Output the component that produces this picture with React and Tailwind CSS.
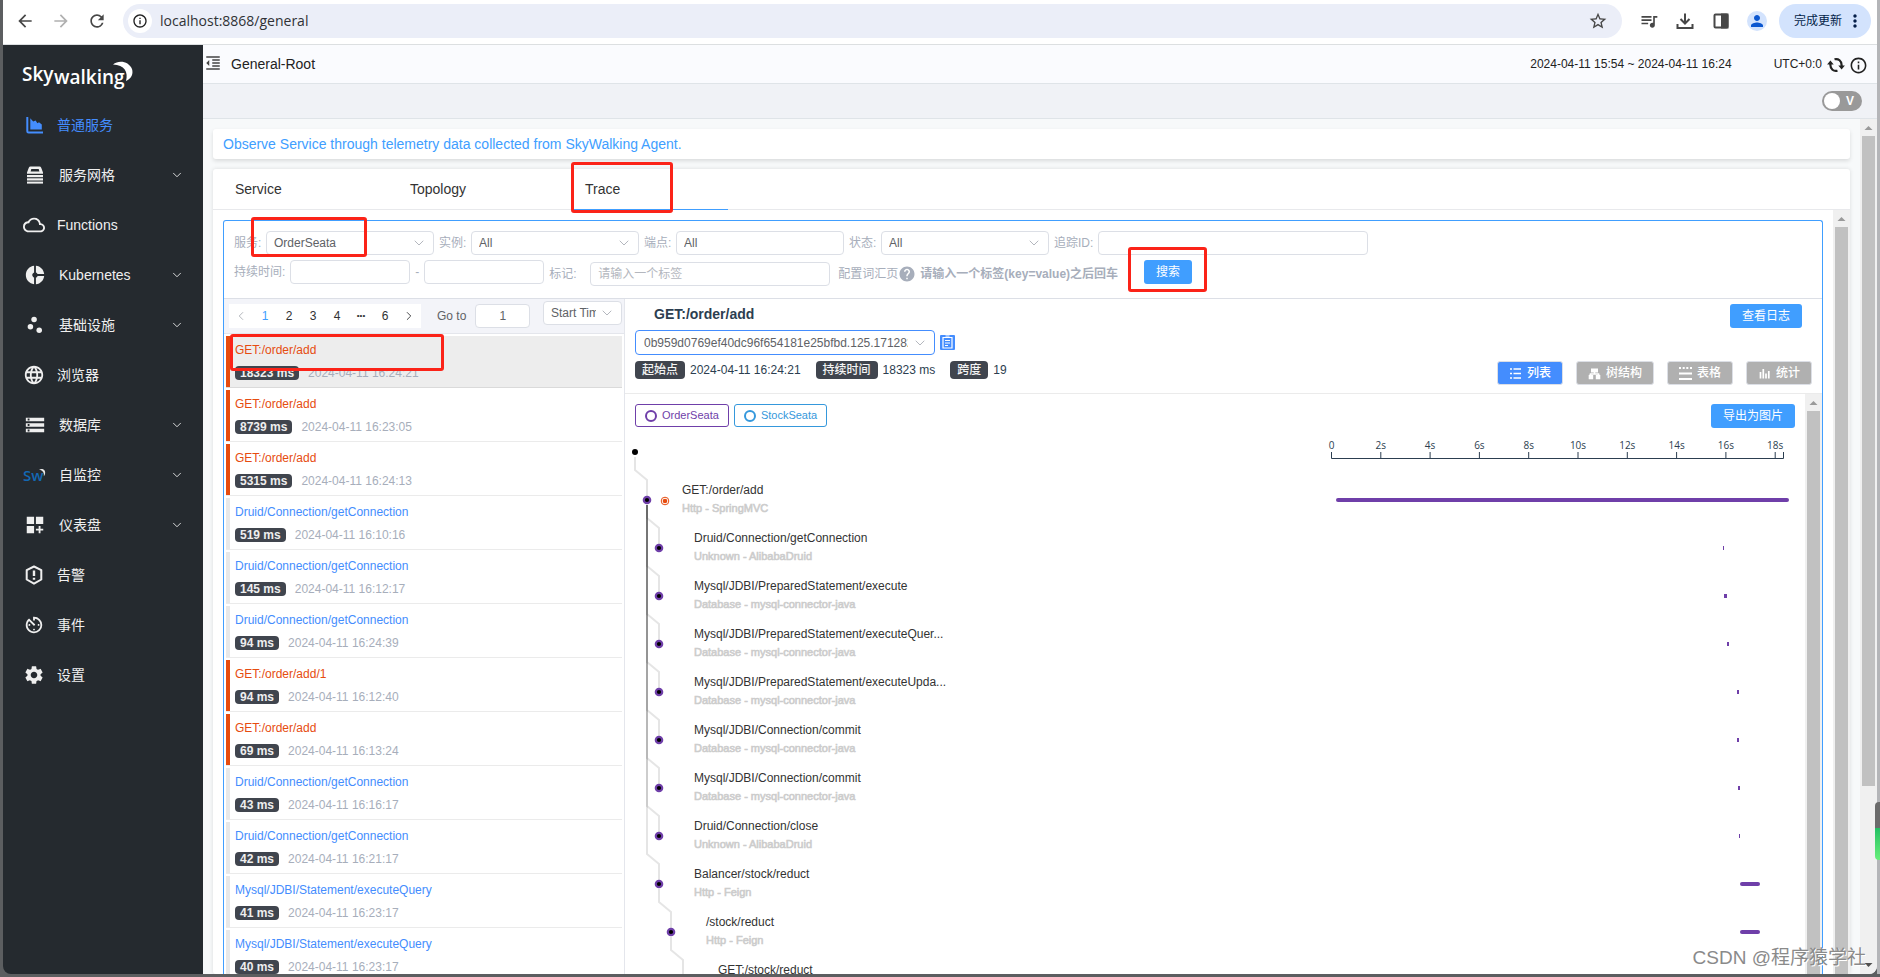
import React, { useState } from "react";
import {
  MdArrowBack,
  MdArrowForward,
  MdRefresh,
  MdInfoOutline,
  MdStarBorder,
  MdQueueMusic,
  MdPerson,
  MdMoreVert,
  MdCloudQueue,
  MdDonutSmall,
  MdScatterPlot,
  MdLanguage,
  MdStorage,
  MdDashboardCustomize,
  MdAvTimer,
  MdSettings,
  MdFormatIndentDecrease,
  MdHelp,
} from "react-icons/md";
import { ChevronDown, ChevronLeft, ChevronRight } from "lucide-react";

const AreaIcon = () => (
  <svg viewBox="0 0 17 17" className="size-[17px]" fill="currentColor">
    <path d="M1.300 0.500v13.700c0 .8.500 1.300 1.300 1.300H16.500" fill="none" stroke="currentColor" strokeWidth="2" strokeLinecap="round" />
    <path d="M4.300 1.200 7.200 4.600 9.600 3.400 11.400 6.200 13 5.300 15.800 7.400V12.600H4.300z" />
  </svg>
);

const MeshIcon = () => (
  <svg viewBox="0 0 18 18" className="size-[18px]" fill="currentColor">
    <path
      fillRule="evenodd"
      d="M4.5 0.5h9c.8 0 1.4.4 1.7 1.200L17 6.500v1.200H1V6.500L2.800 1.700C3.100.900 3.700.500 4.500.500zM5.300 3 4.600 5.500h8.800L12.700 3z"
    />
    <rect x="1" y="9" width="16" height="2.200" />
    <rect x="1" y="12.300" width="16" height="2.200" />
    <rect x="1" y="15.600" width="16" height="2" />
  </svg>
);

const SwIcon = () => (
  <svg viewBox="0 0 24 18" className="h-[18px] w-6 -mx-[2px]">
    <text x="0" y="15" className="fill-[#1368b3] text-[15px] font-semibold" fontFamily="Open Sans, sans-serif">
      Sw
    </text>
    <path d="M16 3.500c3.500-1.600 7 .500 6 4.500-.200.900-.600 1.600-1.200 2.200.6-3-.8-5.800-4.800-6.700z" fill="#e8e8e8" />
  </svg>
);

const AlarmIcon = () => (
  <svg viewBox="0 0 20 20" className="size-5" fill="none" stroke="currentColor" strokeWidth="2" strokeLinejoin="round">
    <path d="M10 1.500 17.300 5.200V14.500L10 18.700 2.700 14.500V5.200z" />
    <path d="M10 5.500v5.500M10 12.700v2" strokeWidth="2.400" />
  </svg>
);

const ReloadIcon = () => (
  <svg viewBox="0 0 18 18" className="size-[18px]" fill="none" stroke="currentColor" strokeWidth="2.200">
    <path d="M7.500 3.300C11.500 2.300 14.600 5 14.600 9V10M10.500 14.700C6.500 15.700 3.400 13 3.400 9V8" />
    <path d="M11.300 9.500h6.600L14.600 13.500zM0.100 8.500h6.600L3.400 4.500z" fill="currentColor" stroke="none" />
  </svg>
);

const MENU = [
  { label: "普通服务", icon: <AreaIcon />, active: true },
  { label: "服务网格", icon: <MeshIcon />, children: true },
  { label: "Functions", icon: <MdCloudQueue className="-mx-[2px] size-[22px]" /> },
  { label: "Kubernetes", icon: <MdDonutSmall className="size-[22px]" />, children: true },
  { label: "基础设施", icon: <MdScatterPlot className="size-[22px]" />, children: true },
  { label: "浏览器", icon: <MdLanguage className="size-[22px]" /> },
  { label: "数据库", icon: <MdStorage className="size-[22px]" />, children: true },
  { label: "自监控", icon: <SwIcon />, children: true },
  { label: "仪表盘", icon: <MdDashboardCustomize className="size-[22px]" />, children: true },
  { label: "告警", icon: <AlarmIcon /> },
  { label: "事件", icon: <MdAvTimer className="size-[22px]" /> },
  { label: "设置", icon: <MdSettings className="size-[22px]" /> },
];

const TRACES = [
  ["GET:/order/add", 18323, "16:24:21", true],
  ["GET:/order/add", 8739, "16:23:05", true],
  ["GET:/order/add", 5315, "16:24:13", true],
  ["Druid/Connection/getConnection", 519, "16:10:16", false],
  ["Druid/Connection/getConnection", 145, "16:12:17", false],
  ["Druid/Connection/getConnection", 94, "16:24:39", false],
  ["GET:/order/add/1", 94, "16:12:40", true],
  ["GET:/order/add", 69, "16:13:24", true],
  ["Druid/Connection/getConnection", 43, "16:16:17", false],
  ["Druid/Connection/getConnection", 42, "16:21:17", false],
  ["Mysql/JDBI/Statement/executeQuery", 41, "16:23:17", false],
  ["Mysql/JDBI/Statement/executeQuery", 40, "16:23:17", false],
];

const SPANS = [
  { name: "GET:/order/add", sub: "Http - SpringMVC", depth: 1, parent: -1, start: 11, width: 453, error: true },
  { name: "Druid/Connection/getConnection", sub: "Unknown - AlibabaDruid", depth: 2, parent: 0, start: 398, width: 1 },
  { name: "Mysql/JDBI/PreparedStatement/execute", sub: "Database - mysql-connector-java", depth: 2, parent: 0, start: 399, width: 3 },
  { name: "Mysql/JDBI/PreparedStatement/executeQuer...", sub: "Database - mysql-connector-java", depth: 2, parent: 0, start: 402, width: 2 },
  { name: "Mysql/JDBI/PreparedStatement/executeUpda...", sub: "Database - mysql-connector-java", depth: 2, parent: 0, start: 412, width: 2 },
  { name: "Mysql/JDBI/Connection/commit", sub: "Database - mysql-connector-java", depth: 2, parent: 0, start: 412, width: 2 },
  { name: "Mysql/JDBI/Connection/commit", sub: "Database - mysql-connector-java", depth: 2, parent: 0, start: 413, width: 2 },
  { name: "Druid/Connection/close", sub: "Unknown - AlibabaDruid", depth: 2, parent: 0, start: 414, width: 1 },
  { name: "Balancer/stock/reduct", sub: "Http - Feign", depth: 2, parent: 0, start: 415, width: 20 },
  { name: "/stock/reduct", sub: "Http - Feign", depth: 3, parent: 8, start: 415, width: 20 },
  { name: "GET:/stock/reduct", depth: 4, parent: 9, start: 425, width: 8 },
];

const nodeX = (depth) => 10 + depth * 12;
const nodeY = (i) => 72 + i * 48;

function Scrollbar({ short }) {
  return (
    <div className="flex w-[17px] shrink-0 flex-col items-center bg-[#f0f0f0]" aria-hidden="true">
      <svg viewBox="0 0 17 17" className="size-[17px] shrink-0">
        <path d="M4.500 11h8L8.500 7z" fill="#9a9a9a" />
      </svg>
      <div className={`w-[13px] bg-[#c1c1c1] ${short ? "h-[650px]" : "flex-1"}`} />
      {short && (
        <svg viewBox="0 0 17 17" className="mt-auto size-[17px] shrink-0">
          <path d="M4.500 6h8l-4 4z" fill="#505050" />
        </svg>
      )}
    </div>
  );
}

function Highlight({ className }) {
  return <div className={`pointer-events-none absolute z-10 rounded-[3px] border-[3px] border-[#fb2318] ${className}`} />;
}

function SelectBox({ id, value, label, className = "", selectClass = "border-[#dcdfe6] pl-[7px]" }) {
  return (
    <div className={`relative flex items-center ${className}`}>
      <select
        id={id}
        aria-label={label}
        className={`h-full w-full appearance-none rounded border bg-white text-xs text-[#606266] outline-none ${selectClass}`}
      >
        <option>{value}</option>
      </select>
      <ChevronDown className="pointer-events-none absolute right-[7px] size-4 text-[#b4b7be]" strokeWidth={1.5} />
    </div>
  );
}

const fieldClass =
  "h-6 rounded border border-[#dcdfe6] bg-white px-[7px] text-xs text-[#606266] outline-none placeholder:text-[#b4b7be]";

function BrowserBar() {
  return (
    <header className="flex h-[45px] shrink-0 items-center border-b border-[#dcdfe1] bg-white pb-[2px] text-[#474747]">
      <div className="flex items-center gap-4 pl-3 pr-4">
        <button aria-label="Back"><MdArrowBack className="size-5" /></button>
        <button aria-label="Forward" className="text-[#b0b0b0]"><MdArrowForward className="size-5" /></button>
        <button aria-label="Reload"><MdRefresh className="size-5" /></button>
      </div>
      <div className="flex h-[34px] flex-1 items-center rounded-full bg-[#ebeef8] pl-[5px] pr-[14px]">
        <span className="flex size-6 items-center justify-center rounded-full bg-white text-[#202020]">
          <MdInfoOutline className="size-4" />
        </span>
        <input
          aria-label="Address"
          className="ml-2 flex-1 bg-transparent font-['Open_Sans',sans-serif] text-sm text-[#303236] outline-none"
          defaultValue="localhost:8868/general"
        />
        <button aria-label="Bookmark"><MdStarBorder className="size-5" /></button>
      </div>
      <div className="flex items-center gap-4 pl-[17px] pr-3">
        <button aria-label="Media"><MdQueueMusic className="size-5" /></button>
        <button aria-label="Downloads">
          <svg viewBox="0 0 20 20" className="size-5" fill="none" stroke="currentColor" strokeWidth="2">
            <path d="M10 2.500v9M5.500 8l4.500 4.500L14.500 8M2.500 13v4h15v-4" />
          </svg>
        </button>
        <button aria-label="Side panel">
          <svg viewBox="0 0 20 20" className="size-5" fill="none" stroke="currentColor" strokeWidth="2">
            <rect x="3.500" y="3.500" width="13" height="13" rx="1" />
            <path d="M11 3.500h5.500v13H11z" fill="currentColor" />
          </svg>
        </button>
        <button aria-label="Profile" className="flex size-5 items-center justify-center rounded-full bg-[#d3e3fd] text-[#0b57d0]">
          <MdPerson className="size-[18px]" />
        </button>
      </div>
      <button className="mr-[6px] flex h-[34px] items-center rounded-full bg-[#d3e3fd] pl-[15px] pr-[6px] text-xs text-[#041e49]">
        完成更新
        <MdMoreVert className="ml-[3px] size-5" />
      </button>
    </header>
  );
}

function Sidebar() {
  return (
    <aside className="w-[200px] shrink-0 bg-[#252a2f] text-[#efefef]">
      <div className="pl-[19px] pt-3">
        <svg viewBox="0 0 116 34" className="block h-[34px] w-[116px]" fill="#fff" fontFamily="Open Sans, sans-serif">
          <text x="0" y="24" fontSize="19" fontWeight="600">Sky</text>
          <text x="32" y="27" fontSize="19" fontWeight="600">walking</text>
          <path d="M91 7.500C97 2.500 107 4.500 110 12c1.500 5-.500 9.500-6 12 2.500-9-1.500-16-13-16.500z" />
        </svg>
      </div>
      <nav className="pt-[9px]">
        {MENU.map((m) => (
          <a
            key={m.label}
            href="#menu"
            className={`flex h-[50px] items-center pr-[19px] text-sm ${m.children ? "pl-[21px]" : "pl-5"} ${m.active ? "text-[#448dfe]" : ""}`}
          >
            <span className="flex w-[22px] items-center justify-center">{m.icon}</span>
            <span className={`flex-1 ${m.children ? "pl-[13px]" : "pl-3"}`}>{m.label}</span>
            {m.children && <ChevronDown className="size-[14px]" strokeWidth={1.5} />}
          </a>
        ))}
      </nav>
    </aside>
  );
}

function TopBar() {
  return (
    <>
      <div className="flex h-[39px] shrink-0 items-center border-b border-[#dfe4e8] bg-[#fafbfe] pl-[1px] pr-[9px] text-[#222]">
        <button aria-label="Collapse menu" className="mb-[3px]">
          <MdFormatIndentDecrease className="size-[18px] text-[#444]" />
        </button>
        <h1 className="flex-1 pl-[9px] text-sm">General-Root</h1>
        <span className="text-xs">2024-04-11 15:54 ~ 2024-04-11 16:24</span>
        <span className="ml-[42px] text-xs">UTC+0:0</span>
        <button aria-label="Reload data" className="ml-[5px] pt-[2px]"><ReloadIcon /></button>
        <button aria-label="About" className="ml-1 pt-[2px]"><MdInfoOutline className="size-[19px]" /></button>
      </div>
      <div className="flex h-[35px] shrink-0 items-center justify-end border-b border-[#dfe4e8] bg-[#f0f2f6] pr-[15px]">
        <label className="relative flex h-5 w-10 cursor-pointer items-center rounded-full bg-[#999] pl-[2px] pr-2 text-xs font-bold text-white">
          <input type="checkbox" className="peer sr-only" aria-label="View mode" />
          <span className="size-4 rounded-full bg-white" />
          <span className="ml-auto">V</span>
        </label>
      </div>
    </>
  );
}

function Filters() {
  return (
    <form className="flex flex-col gap-[5px] border-b border-[#dcdfe6] px-[10px] pb-3 pt-[10px] text-xs text-[#a7aebb]" onSubmit={(e) => e.preventDefault()}>
      <div className="flex items-center gap-[5px]">
        <label htmlFor="service" className="w-[27px] whitespace-nowrap">服务:</label>
        <div className="relative">
          <SelectBox id="service" value="OrderSeata" className="h-6 w-[168px]" />
          <Highlight className="-left-[15px] -top-[14px] h-10 w-[116px]" />
        </div>
        <label htmlFor="instance" className="w-[27px] whitespace-nowrap">实例:</label>
        <SelectBox id="instance" value="All" className="h-6 w-[168px]" />
        <label htmlFor="endpoint" className="w-[27px] whitespace-nowrap">端点:</label>
        <input id="endpoint" className={`${fieldClass} w-[168px]`} defaultValue="All" />
        <label htmlFor="status" className="w-[27px] whitespace-nowrap">状态:</label>
        <SelectBox id="status" value="All" className="h-6 w-[168px]" />
        <label htmlFor="traceid">追踪ID:</label>
        <input id="traceid" className={`${fieldClass} w-[270px]`} />
      </div>
      <div className="flex h-[26px] items-start gap-[5px]">
        <label htmlFor="dur-min" className="leading-6">持续时间:</label>
        <input id="dur-min" className={`${fieldClass} w-[120px]`} />
        <span className="leading-6">-</span>
        <input aria-label="最大持续时间" className={`${fieldClass} w-[120px]`} />
        <div className="flex items-center pt-[2px]">
          <label htmlFor="tags" className="w-[41px]">标记:</label>
          <input id="tags" className={`${fieldClass} w-[240px]`} placeholder="请输入一个标签" />
          <a href="#vocab" className="flex items-center pl-2">
            配置词汇页
            <MdHelp className="size-[18px]" />
          </a>
          <b className="pl-1">请输入一个标签(key=value)之后回车</b>
        </div>
        <div className="relative ml-[21px]">
          <button className="h-6 w-12 rounded-[3px] bg-[#409eff] text-xs text-white">搜索</button>
          <Highlight className="-left-4 -top-[13px] h-[45px] w-[79px]" />
        </div>
      </div>
    </form>
  );
}

function TraceList() {
  const [current, setCurrent] = useState(0);
  return (
    <section className="flex w-[401px] shrink-0 flex-col border-r border-[#e4e6ec]">
      <div className="flex h-[35px] shrink-0 items-start border-b border-[#e4e6ec] bg-[#f3f4f9] pl-[5px] pr-[2px] text-xs text-[#606266]">
        <div className="mt-[5px] flex h-6 items-center bg-white text-[#303133]">
          <button aria-label="Previous page" className="flex w-6 justify-center text-[#a8abb2]"><ChevronLeft className="size-[14px]" strokeWidth={1.5} /></button>
          {["1", "2", "3", "4", "•••", "6"].map((p) => (
            <button key={p} className={`w-6 text-center ${p === "1" ? "text-[#409eff]" : ""} ${p === "•••" ? "text-[8px]" : ""}`}>{p}</button>
          ))}
          <button aria-label="Next page" className="flex w-6 justify-center"><ChevronRight className="size-[14px]" strokeWidth={1.5} /></button>
        </div>
        <label htmlFor="goto" className="mt-[5px] pl-4 leading-6">Go to</label>
        <input id="goto" defaultValue="1" className={`${fieldClass} ml-[9px] mt-[5px] w-[55px] text-center`} />
        <SelectBox id="order" label="Order" value="Start Time" className="ml-auto mt-[2px] h-6 w-[79px]" selectClass="border-[#dcdfe6] pl-[7px] pr-[25px]" />
      </div>
      <ul className="relative flex min-h-0 flex-1 flex-col gap-[2px] overflow-hidden px-[2px] pt-[2px]">
        <Highlight className="left-[6px] top-0 h-[37px] w-[214px]" />
        {TRACES.map(([name, ms, time, error], i) => (
          <li key={i} className="shrink-0">
            <button
              onClick={() => setCurrent(i)}
              className={`flex h-[52px] w-full border-b text-left text-xs ${i === current ? "border-[#dadada] bg-[#ededed]" : "border-[#ebebeb]"}`}
            >
              <span className={`h-full w-1 shrink-0 ${error ? "bg-[#e64c10]" : "bg-[#e8e8e8]"}`} />
              <span className="flex flex-col pl-[5px] pt-[6px]">
                <span className={`leading-4 ${error ? "text-[#e64c10]" : "text-[#448dfe]"}`}>{name}</span>
                <span className="flex items-center gap-[9px] pt-[7px]">
                  <span className="rounded bg-[#40454e] px-[5px] font-bold leading-[14px] text-[#eee]">{ms} ms</span>
                  <span className="leading-4 text-[#a7aebb]">2024-04-11 {time}</span>
                </span>
              </span>
            </button>
          </li>
        ))}
      </ul>
    </section>
  );
}

const VIEWS = [
  {
    label: "列表",
    active: true,
    icon: <path d="M1 2h2M4.500 2H12M1 6.500h2M4.500 6.500H12M1 11h2M4.500 11H12" stroke="#fff" strokeWidth="1.500" />,
  },
  {
    label: "树结构",
    icon: (
      <path
        d="M3 1.500h7v4H7.300V6.300h3.200c.6 0 1 .4 1 1V8h.8v4.300H7.800V8h1.800V7.800H3.400V8h1.800v4.300H.7V8h.8V7.300c0-.6.4-1 1-1h3.200V5.500H3z"
        fill="#fff"
      />
    ),
  },
  {
    label: "表格",
    icon: <path d="M0 1h2M3.700 1h2M7.300 1h2M11 1h2M0 6.500h13M0 12h13" stroke="#fff" strokeWidth="2" />,
  },
  { label: "统计", icon: <path d="M2.500 5v6.500M5.300 2v9.500M8 6.500v5M10.800 4v7.500" stroke="#fff" strokeWidth="1.700" /> },
];

function Stat({ label, value }) {
  return (
    <span className="flex items-center">
      <span className="rounded bg-[#40454e] px-[7px] font-medium leading-[18px] text-[#f4f4f4]">{label}</span>
      <span className="pl-[5px] text-[#2c3e50]">{value}</span>
    </span>
  );
}

function TraceHeader() {
  return (
    <div className="border-b border-[#ebebeb] px-[10px] pb-2">
      <div className="flex h-[31px] items-center pb-[1px] pl-[19px] pr-[10px]">
        <h2 className="flex-1 text-sm font-bold text-[#2c3e50]">GET:/order/add</h2>
        <button className="mt-[3px] h-6 rounded-[3px] bg-[#409eff] px-3 text-xs text-white">查看日志</button>
      </div>
      <div className="flex items-center gap-[5px]">
        <SelectBox
          id="trace"
          label="Trace ID"
          value="0b959d0769ef40dc96f654181e25bfbd.125.17128238615430015"
          className="h-[25px] w-[300px]"
          selectClass="border-[#448dfe] pl-2 pr-[26px]"
        />
        <button aria-label="Copy trace ID">
          <svg viewBox="0 0 15 15" className="size-[15px]">
            <rect width="15" height="15" rx="1" fill="#448dfe" />
            <path d="M3 2.500h9v10.500H3zM5.500 1h4" stroke="#fff" fill="none" strokeWidth="1.200" />
            <path d="M5 5.500h5M5 8h5M5 10.500h3" stroke="#fff" />
          </svg>
        </button>
      </div>
      <div className="mt-[6px] flex items-start text-xs">
        <div className="flex flex-1 gap-[15px]">
          <Stat label="起始点" value="2024-04-11 16:24:21" />
          <Stat label="持续时间" value="18323 ms" />
          <Stat label="跨度" value="19" />
        </div>
        <div className="flex gap-[13px]">
          {VIEWS.map((v) => (
            <button
              key={v.label}
              className={`flex h-6 items-center gap-[5px] rounded-[3px] border border-[#dcdfe6] px-[11px] font-medium text-white ${v.active ? "bg-[#448dfe]" : "bg-[#b0b0b0]"}`}
            >
              <svg viewBox="0 0 13 13" className="size-[13px]" fill="none">{v.icon}</svg>
              {v.label}
            </button>
          ))}
        </div>
      </div>
    </div>
  );
}

function ServiceTag({ name, className }) {
  return (
    <span className={`flex h-[23px] items-center gap-[5px] rounded-[3px] border px-[9px] text-[11px] ${className}`}>
      <span className="size-3 rounded-full border-2 border-current" />
      {name}
    </span>
  );
}

function SpanTree() {
  return (
    <svg viewBox="0 0 380 580" className="h-[580px] w-[380px] shrink-0" fontFamily="Liberation Sans, Arial, sans-serif">
      <circle cx="10" cy="24" r="3" />
      <g fill="none" stroke="rgba(0,0,0,0.1)" strokeWidth="2">
        {SPANS.map((s, i) => {
          const px = nodeX(s.depth - 1);
          const py = s.parent < 0 ? 24 : nodeY(s.parent);
          const x = nodeX(s.depth);
          const y = nodeY(i);
          return <path key={i} d={`M${px} ${py + 5}V${y - 30}L${x} ${y - 20}V${y - 4}`} />;
        })}
      </g>
      {SPANS.map((s, i) => {
        const x = nodeX(s.depth);
        const y = nodeY(i);
        return (
          <g key={i}>
            <circle cx={x} cy={y} r="3.200" fill="#000" stroke="#6f3fa9" strokeWidth="2.200" />
            {s.error && (
              <>
                <circle cx={x + 18} cy={y + 1} r="3.800" fill="none" stroke="#e64c10" />
                <circle cx={x + 18} cy={y + 1} r="2.300" fill="#e64c10" />
              </>
            )}
            <text x={x + 35} y={y - 6} fontSize="12" fill="#333">{s.name}</text>
            {s.sub && <text x={x + 35} y={y + 12} fontSize="11" fill="#ccc" stroke="#ccc" strokeWidth="0.600">{s.sub}</text>}
          </g>
        );
      })}
    </svg>
  );
}

function Timeline() {
  const ticks = [0, 2, 4, 6, 8, 10, 12, 14, 16, 18];
  return (
    <svg viewBox="0 0 480 580" className="h-[580px] w-[480px] shrink-0" fontFamily="Open Sans, sans-serif">
      <path d="M6.500 24V30.500H458.500V24" fill="none" stroke="#2c3e50" />
      {ticks.map((t, i) => (
        <g key={t}>
          <path d={`M${6.5 + i * 49.3} 24v6`} stroke="#2c3e50" />
          <text x={6.5 + i * 49.3} y="21" textAnchor="middle" fontSize="10" fill="#2c3e50">{t ? `${t}s` : "0"}</text>
        </g>
      ))}
      {SPANS.map((s, i) => (
        <rect key={i} x={s.start} y={nodeY(i) - 2} width={s.width} height="4" rx={s.width > 3 ? 2 : 0} fill="#6f3fa9" />
      ))}
    </svg>
  );
}

export default function App() {
  return (
    <div className="relative h-screen overflow-hidden bg-[#5c5e60] pb-[3px] pl-[3px] font-['Liberation_Sans',Arial,'Noto_Sans_CJK_SC',sans-serif]">
      <div className="flex h-full bg-[#5c5e60]">
        <div className="flex min-w-0 flex-1 flex-col overflow-hidden rounded-b-lg">
          <BrowserBar />
          <div className="flex min-h-0 flex-1">
            <Sidebar />
            <div className="flex min-w-0 flex-1 flex-col bg-[#f7f9fa]">
              <TopBar />
              <div className="flex min-h-0 flex-1">
                <main className="flex min-w-0 flex-1 flex-col gap-[10px] px-[10px] pt-[10px]">
                  <p className="shrink-0 rounded-[3px] bg-white px-[10px] text-sm leading-[30px] text-[#409eff] shadow-[0_2px_4px_rgba(0,0,0,0.12)]">
                    Observe Service through telemetry data collected from SkyWalking Agent.
                  </p>
                  <div className="flex min-h-0 flex-1 flex-col rounded-[3px] bg-white shadow-[0_0_4px_rgba(0,0,0,0.12)]">
                    <div className="flex h-[41px] shrink-0 border-b border-[#e8e9ec] pl-[10px] text-sm text-[#333]">
                      {["Service", "Topology", "Trace"].map((t) => (
                        <div key={t} className="relative flex w-[175px]">
                          <button className={`-mb-[1px] w-[155px] border-b pl-3 text-left ${t === "Trace" ? "border-[#409eff]" : "border-transparent"}`}>{t}</button>
                          {t === "Trace" && <Highlight className="-left-[2px] -top-[7px] h-[51px] w-[102px]" />}
                        </div>
                      ))}
                    </div>
                    <div className="flex min-h-0 flex-1">
                      <div className="flex min-w-0 flex-1 px-[10px] pt-[10px]">
                        <div className="flex min-w-0 flex-1 flex-col rounded-t-[3px] border border-b-0 border-[#409eff]">
                          <Filters />
                          <div className="flex min-h-0 flex-1">
                            <TraceList />
                            <section className="flex min-w-0 flex-1 flex-col">
                              <TraceHeader />
                              <div className="flex min-h-0 flex-1">
                                <div className="min-w-0 flex-1 overflow-hidden">
                                  <div className="flex items-start gap-[5px] px-[10px] pt-[10px]">
                                    <ServiceTag name="OrderSeata" className="border-[#6f3fa9] text-[#6f3fa9]" />
                                    <ServiceTag name="StockSeata" className="border-[#3598dc] text-[#3598dc]" />
                                    <button className="ml-auto h-6 w-[84px] rounded-[3px] bg-[#409eff] text-xs text-white">导出为图片</button>
                                  </div>
                                  <div className="flex justify-between">
                                    <SpanTree />
                                    <Timeline />
                                  </div>
                                </div>
                                <Scrollbar />
                              </div>
                            </section>
                          </div>
                        </div>
                      </div>
                      <Scrollbar />
                    </div>
                  </div>
                </main>
                <Scrollbar short />
              </div>
            </div>
          </div>
        </div>
        <div className="w-[3px] shrink-0 bg-[#b4b5b8]" />
      </div>
      <div className="absolute bottom-[117px] right-0 h-[58px] w-[5px] rounded-l bg-linear-to-b from-[#6b6b6b] from-45% via-[#20c063] via-45% to-[#66f07a]" />
      <div className="absolute bottom-[5px] right-[14px] text-[19px] leading-7 text-[#8a8a8a] [text-shadow:1px_1px_0_#fff]">
        CSDN @程序猿学社
      </div>
    </div>
  );
}
